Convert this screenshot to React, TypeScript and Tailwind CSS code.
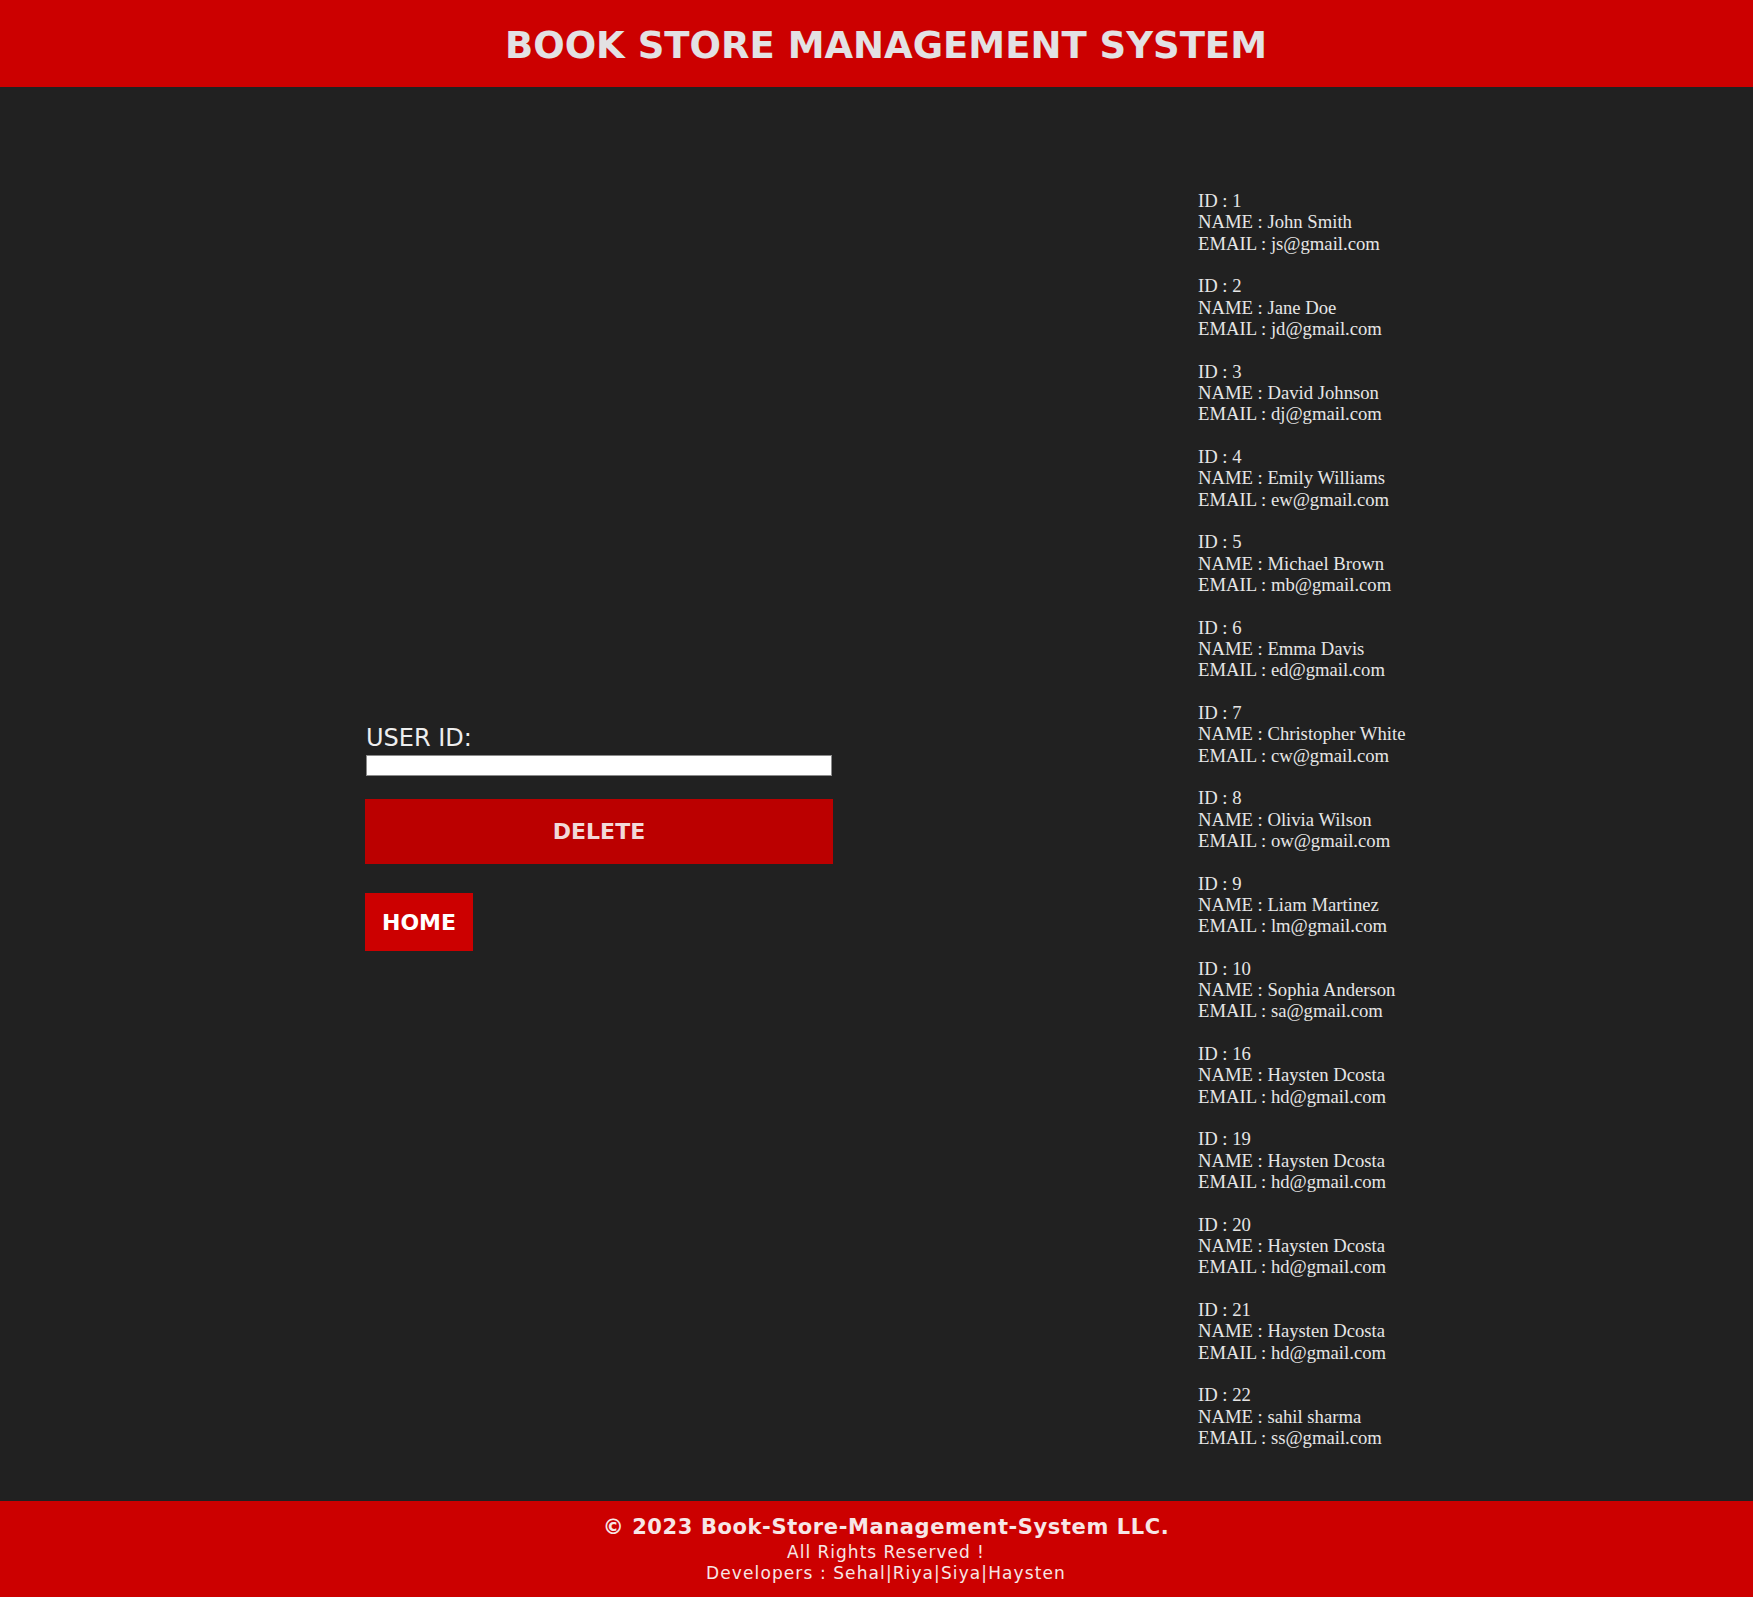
import React, { useState } from "react";

interface User {
  id: number;
  name: string;
  email: string;
}

const users: User[] = [
  { id: 1, name: "John Smith", email: "js@gmail.com" },
  { id: 2, name: "Jane Doe", email: "jd@gmail.com" },
  { id: 3, name: "David Johnson", email: "dj@gmail.com" },
  { id: 4, name: "Emily Williams", email: "ew@gmail.com" },
  { id: 5, name: "Michael Brown", email: "mb@gmail.com" },
  { id: 6, name: "Emma Davis", email: "ed@gmail.com" },
  { id: 7, name: "Christopher White", email: "cw@gmail.com" },
  { id: 8, name: "Olivia Wilson", email: "ow@gmail.com" },
  { id: 9, name: "Liam Martinez", email: "lm@gmail.com" },
  { id: 10, name: "Sophia Anderson", email: "sa@gmail.com" },
  { id: 16, name: "Haysten Dcosta", email: "hd@gmail.com" },
  { id: 19, name: "Haysten Dcosta", email: "hd@gmail.com" },
  { id: 20, name: "Haysten Dcosta", email: "hd@gmail.com" },
  { id: 21, name: "Haysten Dcosta", email: "hd@gmail.com" },
  { id: 22, name: "sahil sharma", email: "ss@gmail.com" },
];

const sans = "font-['DejaVu_Sans','Liberation_Sans',sans-serif]";

export default function App() {
  const [userId, setUserId] = useState("");

  return (
    <div className={`min-h-screen flex flex-col bg-[#212121] ${sans}`}>
      {/* header */}
      <header className="h-[87px] bg-[#cc0000] flex justify-center pt-[27px] pl-[19px]">
        <h1 className="text-[37px] leading-[37px] font-bold text-[#e3e1e3]">
          BOOK STORE MANAGEMENT SYSTEM
        </h1>
      </header>

      {/* main */}
      <main className="flex pb-[31px]">
        {/* delete form */}
        <div className="ml-[365px] w-[468px] pt-[637px]">
          <label
            htmlFor="userid"
            className="block text-[24px] leading-[28px] text-[#eeeeee] pl-px"
          >
            USER ID:
          </label>
          <input
            id="userid"
            type="text"
            value={userId}
            onChange={(e) => setUserId(e.target.value)}
            className="mt-[3px] ml-px block w-[466px] h-[21px] bg-white border border-[#8a8a8a] outline-none"
          />
          <button
            type="button"
            className="mt-[23px] w-[468px] h-[65px] bg-[#bb0000] text-[22px] font-bold text-[#f2d9d9]"
          >
            DELETE
          </button>
          <button
            type="button"
            className="mt-[29px] block h-[58px] px-[17px] bg-[#cc0000] text-[22px] font-bold text-white"
          >
            HOME
          </button>
        </div>

        {/* user list */}
        <div className="ml-[365px] pt-[103px] font-['Liberation_Serif','Times_New_Roman',serif] text-[18.67px] leading-[21.333px] text-[#e6e6e6]">
          {users.map((u) => (
            <div key={u.id} className="pb-[21.333px]">
              <div>ID : {u.id}</div>
              <div>NAME : {u.name}</div>
              <div>EMAIL : {u.email}</div>
            </div>
          ))}
        </div>
      </main>

      {/* footer */}
      <footer className="h-[96px] bg-[#cc0000] flex flex-col items-center pt-[14px] pl-[19px] text-[#f7e6e6]">
        <p className="text-[21px] leading-[24px] font-bold tracking-[0.6px]">
          © 2023 Book-Store-Management-System LLC.
        </p>
        <p className="mt-[3px] text-[17px] leading-[21.7px] tracking-[1px]">
          All Rights Reserved !
        </p>
        <p className="text-[17px] leading-[21.7px] tracking-[1.1px]">
          Developers : Sehal|Riya|Siya|Haysten
        </p>
      </footer>
    </div>
  );
}
